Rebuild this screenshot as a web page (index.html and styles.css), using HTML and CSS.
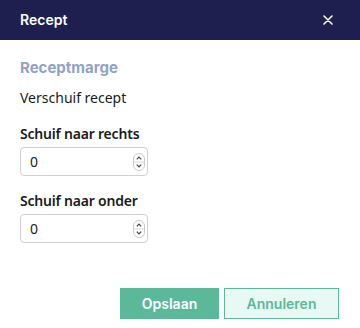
FILE: index.html
```html
<!DOCTYPE html>
<html lang="nl">
<head>
<meta charset="utf-8">
<title>Recept</title>
<link rel="stylesheet" href="styles.css">
</head>
<body>
<div class="dialog">
  <header class="dialog-header">
    <h1 class="dialog-title">Recept</h1>
    <button class="close-btn" type="button" aria-label="Sluiten">
      <svg width="10" height="10" viewBox="0 0 10 10"><path d="M1 1 L9 9 M9 1 L1 9" stroke="#ffffff" stroke-width="1.6" stroke-linecap="round" fill="none"/></svg>
    </button>
  </header>
  <main class="dialog-body">
    <h2 class="section-title">Receptmarge</h2>
    <p class="section-text">Verschuif recept</p>
    <div class="field">
      <label class="field-label" for="rechts">Schuif naar rechts</label>
      <div class="input-wrap">
        <input class="field-input" id="rechts" type="number" value="0">
        <svg class="spinner" width="12" height="18" viewBox="0 0 12 18"><rect x="0.5" y="0.5" width="11" height="17" rx="5.5" fill="#ffffff" stroke="#c9c9c9"/><line x1="1" y1="9" x2="11" y2="9" stroke="#d6d6d6"/><path d="M3.8 6.3 L6 4.1 L8.2 6.3" stroke="#444" stroke-width="1.2" fill="none"/><path d="M3.8 11.7 L6 13.9 L8.2 11.7" stroke="#444" stroke-width="1.2" fill="none"/></svg>
      </div>
    </div>
    <div class="field">
      <label class="field-label" for="onder">Schuif naar onder</label>
      <div class="input-wrap">
        <input class="field-input" id="onder" type="number" value="0">
        <svg class="spinner" width="12" height="18" viewBox="0 0 12 18"><rect x="0.5" y="0.5" width="11" height="17" rx="5.5" fill="#ffffff" stroke="#c9c9c9"/><line x1="1" y1="9" x2="11" y2="9" stroke="#d6d6d6"/><path d="M3.8 6.3 L6 4.1 L8.2 6.3" stroke="#444" stroke-width="1.2" fill="none"/><path d="M3.8 11.7 L6 13.9 L8.2 11.7" stroke="#444" stroke-width="1.2" fill="none"/></svg>
      </div>
    </div>
  </main>
  <footer class="dialog-footer">
    <button class="btn btn-primary" type="button">Opslaan</button>
    <button class="btn btn-secondary" type="button">Annuleren</button>
  </footer>
</div>
</body>
</html>
```
FILE: styles.css
```css
* { box-sizing: border-box; }
html, body { margin: 0; padding: 0; background: #ffffff; }
body {
  width: 360px;
  height: 328px;
  font-family: "Noto Sans", "Open Sans", sans-serif;
  color: #1a1a1a;
}
.dialog {
  display: flex;
  flex-direction: column;
  height: 328px;
}
.dialog-header {
  height: 40px;
  background: #1e1f4e;
  display: flex;
  align-items: center;
  justify-content: space-between;
  padding: 0 27px 0 20px;
}
.dialog-title {
  margin: 0;
  font-family: "Inter", sans-serif;
  font-weight: 600;
  font-size: 14px;
  color: #ffffff;
  line-height: 20px;
}
.close-btn {
  border: 0;
  background: none;
  padding: 0;
  width: 10px;
  height: 10px;
  display: flex;
  cursor: pointer;
}
.dialog-body {
  padding: 18px 20px 0;
  display: flex;
  flex-direction: column;
  align-items: flex-start;
  flex: 1;
}
.section-title {
  margin: 0;
  font-family: "Inter", sans-serif;
  font-weight: 700;
  font-size: 15px;
  line-height: 20px;
  color: #8fa3c9;
}
.section-text {
  margin: 10px 0 0;
  font-size: 14px;
  line-height: 20px;
  color: #1a1a1a;
}
.field {
  display: flex;
  flex-direction: column;
  gap: 3px;
  margin-top: 16px;
}
.field + .field { margin-top: 15px; }
.field-label {
  font-size: 14px;
  font-weight: 600;
  line-height: 20px;
  letter-spacing: -0.2px;
  color: #1a1a1a;
}
.input-wrap {
  position: relative;
  width: 128px;
}
.field-input {
  width: 128px;
  height: 29px;
  border: 1px solid #cfcfcf;
  border-radius: 4px;
  padding: 0 20px 0 9px;
  font-family: "Noto Sans", sans-serif;
  font-size: 14px;
  color: #1a1a1a;
  background: #ffffff;
  -moz-appearance: textfield;
  appearance: textfield;
}
.field-input::-webkit-inner-spin-button,
.field-input::-webkit-outer-spin-button {
  -webkit-appearance: none;
  margin: 0;
}
.spinner {
  position: absolute;
  right: 3px;
  top: 6px;
  pointer-events: none;
}
.dialog-footer {
  display: flex;
  justify-content: flex-end;
  gap: 5px;
  padding: 0 21px 9px;
}
.btn {
  height: 31px;
  font-family: "Inter", sans-serif;
  font-weight: 600;
  font-size: 14px;
  border-radius: 0;
  cursor: pointer;
}
.btn-primary {
  width: 99px;
  background: #5bb99a;
  border: 1px solid #5bb99a;
  color: #ffffff;
}
.btn-secondary {
  width: 115px;
  background: #e8f8f3;
  border: 1px solid #5bb99a;
  color: #5bb99a;
}
```
